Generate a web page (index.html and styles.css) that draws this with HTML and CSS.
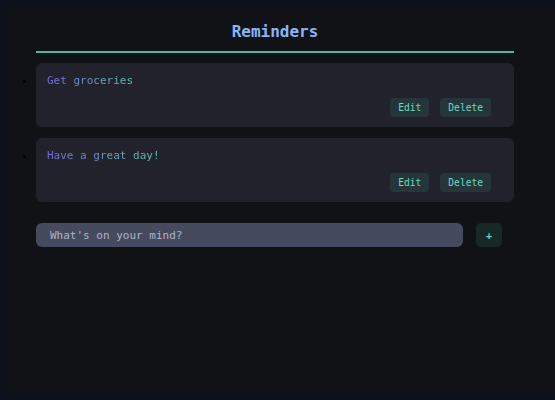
FILE: index.html
```html
<!DOCTYPE html>
<html lang="en">
<head>
<meta charset="utf-8">
<title>Reminders</title>
<link rel="stylesheet" href="styles.css">
</head>
<body>
<main class="app">
  <div class="wrap">
    <h1 class="title">Reminders</h1>
    <ul class="list">
      <li class="card">
        <span class="text">Get groceries</span>
        <div class="actions">
          <button class="btn">Edit</button>
          <button class="btn">Delete</button>
        </div>
      </li>
      <li class="card">
        <span class="text">Have a great day!</span>
        <div class="actions">
          <button class="btn">Edit</button>
          <button class="btn">Delete</button>
        </div>
      </li>
    </ul>
    <form class="add">
      <input class="field" type="text" placeholder="What's on your mind?">
      <button class="plus" type="button">+</button>
    </form>
  </div>
</main>
</body>
</html>
```
FILE: styles.css
```css
html, body {
  height: 100%;
}
body {
  margin: 8px 0 8px 8px;
  background: #0d111a;
  font-family: "DejaVu Sans Mono", "Liberation Mono", monospace;
  box-sizing: border-box;
}
.app {
  background: #111216;
  min-height: 384px;
  padding: 12px 0 20px 28px;
  box-sizing: border-box;
}
.wrap {
  width: 478px;
}
.title {
  margin: 0;
  font-size: 16px;
  line-height: 24px;
  font-weight: bold;
  text-align: center;
  color: #8ab4f8;
  padding-bottom: 7px;
  border-bottom: 2px solid #4db8a2;
}
.list {
  margin: 10px 0 0;
  padding: 0;
  list-style: disc outside;
  color: #000;
}
.card {
  background: #22222c;
  border-radius: 6px;
  padding: 11px 23px 10px 11px;
  margin-bottom: 11px;
  font-size: 11px;
  line-height: 14px;
}
.card::marker {
  font-size: 11px;
}
.text {
  display: inline-block;
  background: linear-gradient(90deg, #7a6ad8, #5ec8b0);
  -webkit-background-clip: text;
  background-clip: text;
  color: transparent;
}
.actions {
  display: flex;
  justify-content: flex-end;
  gap: 11px;
  margin-top: 10px;
}
.btn {
  height: 19px;
  padding: 0 8px;
  border: none;
  border-radius: 4px;
  background: #25363a;
  color: #6ed8c4;
  font-family: inherit;
  font-size: 9.6px;
  line-height: 19px;
}
.add {
  display: flex;
  gap: 13px;
  margin-top: 21px;
}
.field {
  width: 427px;
  height: 24px;
  box-sizing: border-box;
  border: none;
  border-radius: 6px;
  background: #464a5e;
  padding: 0 14px;
  font-family: inherit;
  font-size: 11px;
  color: #d0d3de;
  outline: none;
}
.field::placeholder {
  color: #b0b4c4;
}
.plus {
  width: 26px;
  height: 24px;
  border: none;
  border-radius: 5px;
  background: #182826;
  color: #6ed8c4;
  font-family: inherit;
  font-size: 10px;
  font-weight: bold;
  padding: 0;
}
```
